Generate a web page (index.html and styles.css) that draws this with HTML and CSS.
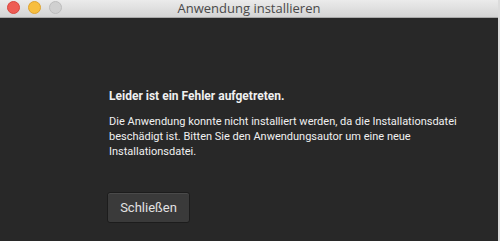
FILE: index.html
```html
<!DOCTYPE html>
<html lang="de">
<head>
<meta charset="UTF-8" />
<meta name="viewport" content="width=device-width, initial-scale=1" />
<link rel="stylesheet" href="styles.css">
</head>
<body>

<div class="window">
  <div class="titlebar">
    <div class="lights">
      <span class="light red"></span>
      <span class="light yellow"></span>
      <span class="light grey"></span>
    </div>
    <div class="title">Anwendung installieren</div>
  </div>

  <div class="content">
    <p class="heading">Leider ist ein Fehler aufgetreten.</p>
    <p class="message">Die Anwendung konnte nicht installiert werden, da die Installationsdatei beschädigt ist. Bitten Sie den Anwendungsautor um eine neue Installationsdatei.</p>
    <div class="actions">
      <button class="btn" type="button">Schließen</button>
    </div>
  </div>
</div>

</body>
</html>
```

FILE: styles.css
```css
html, body {
  margin: 0;
  height: 100%;
  background: #dcdcdc;
}

body {
  font-family: Roboto, "DejaVu Sans", sans-serif;
  overflow: hidden;
}

.window {
  width: 498px;
  height: 241px;
  display: flex;
  flex-direction: column;
  background: #282828;
}

.titlebar {
  position: relative;
  height: 17px;
  flex-shrink: 0;
  background: linear-gradient(#ebebeb, #d4d4d4);
  border-bottom: 1px solid #a9a9a9;
  display: flex;
  align-items: center;
  justify-content: center;
}

.lights {
  position: absolute;
  left: 7px;
  top: 1px;
  display: flex;
  gap: 8px;
}

.light {
  width: 13px;
  height: 13px;
  border-radius: 50%;
  box-sizing: border-box;
}

.light.red { background: #ee5c54; border: 1px solid #d8463e; }
.light.yellow { background: #f7be3f; border: 1px solid #dea330; }
.light.grey { background: #d0d0d0; border: 1px solid #bdbdbd; }

.title {
  font-family: "Open Sans", sans-serif;
  font-size: 13px;
  color: #4a4a4a;
  line-height: 17px;
}

.content {
  flex-grow: 1;
  padding: 71px 0 0 109px;
  color: #f0f0f0;
  font-size: 11px;
}

.heading {
  margin: 0 0 10px;
  font-size: 12px;
  font-weight: 700;
  line-height: 15px;
}

.message {
  margin: 0;
  width: 360px;
  line-height: 15px;
}

.actions {
  margin: 33px 0 0 -2px;
}

.btn {
  font-family: inherit;
  font-size: 13px;
  color: #e2e2e2;
  background: #3a3a3a;
  border: 1px solid #1c1c1c;
  border-radius: 3px;
  box-shadow: inset 0 1px 0 #4a4a4a;
  width: 83px;
  height: 31px;
  padding: 0;
}
```
